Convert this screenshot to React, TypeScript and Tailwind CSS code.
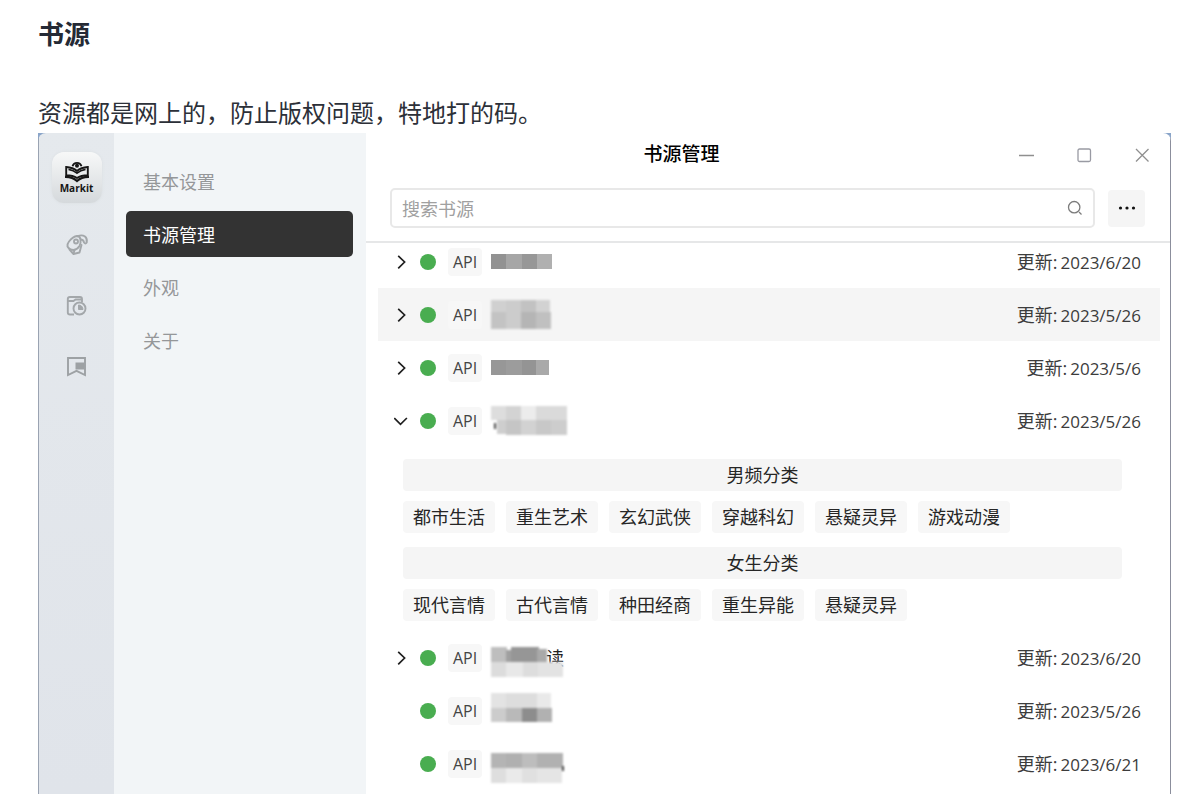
import { useState } from 'react';

type Block = [x: number, y: number, w: number, h: number, fill: string];

interface Source {
  id: number;
  date: string;
  expandable: boolean;
  highlighted?: boolean;
  width: number;
  blocks: Block[];
  sharp?: boolean;
  tail?: string;
  groups?: { title: string; tags: string[] }[];
}

const sources: Source[] = [
  {
    id: 1,
    date: '2023/6/20',
    expandable: true,
    width: 61,
    sharp: true,
    blocks: [
      [0, 11, 15, 15, '#929292'],
      [15, 11, 16, 15, '#a6a6a6'],
      [31, 11, 15, 15, '#979797'],
      [46, 11, 15, 15, '#b0b0b0'],
    ],
  },
  {
    id: 2,
    date: '2023/5/26',
    expandable: true,
    highlighted: true,
    width: 60,
    blocks: [
      [0, 4, 16, 14, '#d0d0d0'],
      [15, 4, 16, 14, '#cccccc'],
      [30, 4, 16, 14, '#c2c2c2'],
      [45, 4, 14, 14, '#d2d2d2'],
      [0, 16, 16, 17, '#c3c3c3'],
      [15, 16, 16, 17, '#cccccc'],
      [30, 16, 16, 17, '#b5b5b5'],
      [45, 16, 15, 17, '#c0c0c0'],
    ],
  },
  {
    id: 3,
    date: '2023/5/6',
    expandable: true,
    width: 58,
    sharp: true,
    blocks: [
      [0, 11, 15, 15, '#979797'],
      [15, 11, 16, 15, '#9c9c9c'],
      [31, 11, 14, 15, '#949494'],
      [45, 11, 13, 15, '#a9a9a9'],
    ],
  },
  {
    id: 4,
    date: '2023/5/26',
    expandable: true,
    width: 76,
    blocks: [
      [0, 4, 16, 14, '#dddddd'],
      [15, 4, 16, 14, '#d3d3d3'],
      [30, 4, 16, 14, '#ececec'],
      [45, 4, 31, 14, '#dadada'],
      [6, 18, 10, 14, '#cecece'],
      [3, 21, 2, 6, '#4a4a4a'],
      [15, 18, 16, 15, '#c5c5c5'],
      [30, 18, 16, 15, '#d2d2d2'],
      [45, 18, 16, 15, '#c8c8c8'],
      [60, 18, 16, 15, '#cdcdcd'],
    ],
    groups: [
      {
        title: '男频分类',
        tags: ['都市生活', '重生艺术', '玄幻武侠', '穿越科幻', '悬疑灵异', '游戏动漫'],
      },
      {
        title: '女生分类',
        tags: ['现代言情', '古代言情', '种田经商', '重生异能', '悬疑灵异'],
      },
    ],
  },
  {
    id: 5,
    date: '2023/6/20',
    expandable: true,
    width: 73,
    tail: '读',
    blocks: [
      [0, 8, 16, 15, '#bebebe'],
      [15, 11, 16, 12, '#a0a0a0'],
      [20, 8, 28, 15, '#969696'],
      [46, 10, 10, 13, '#a9a9a9'],
      [0, 23, 16, 15, '#dcdcdc'],
      [15, 23, 17, 15, '#e8e8e8'],
      [32, 23, 16, 15, '#dddddd'],
      [47, 23, 25, 15, '#e3e3e3'],
    ],
  },
  {
    id: 6,
    date: '2023/5/26',
    expandable: false,
    width: 61,
    blocks: [
      [0, 1, 16, 15, '#e3e3e3'],
      [15, 1, 31, 15, '#dddddd'],
      [46, 1, 14, 15, '#e9e9e9'],
      [0, 16, 16, 14, '#cccccc'],
      [15, 16, 16, 14, '#b9b9b9'],
      [31, 16, 15, 14, '#8d8d8d'],
      [46, 16, 15, 14, '#b1b1b1'],
    ],
  },
  {
    id: 7,
    date: '2023/6/21',
    expandable: false,
    width: 73,
    blocks: [
      [0, 8, 16, 15, '#b4b4b4'],
      [15, 8, 16, 15, '#b0b0b0'],
      [31, 8, 16, 15, '#bdbdbd'],
      [46, 8, 26, 15, '#b1b1b1'],
      [71, 21, 2, 5, '#4a4a4a'],
      [0, 23, 16, 15, '#dedede'],
      [15, 23, 16, 15, '#eaeaea'],
      [31, 23, 16, 15, '#e0e0e0'],
      [46, 23, 25, 15, '#e5e5e5'],
    ],
  },
];

const menuItems = ['基本设置', '书源管理', '外观', '关于'];

function Mosaic({ source }: { source: Source }) {
  return (
    <span className="relative flex">
      {source.tail && (
        <span className="absolute left-[55px] top-[7px] text-[18px] leading-6 text-[#222222]">{source.tail}</span>
      )}
      <svg
        className={source.sharp ? 'relative overflow-visible' : 'relative overflow-visible blur-[1px]'}
        width={source.width}
        height="37"
        shapeRendering="crispEdges"
        aria-hidden="true"
      >
        {source.blocks.map(([x, y, w, h, fill], i) => (
          <rect key={i} x={x} y={y} width={w} height={h} fill={fill} />
        ))}
      </svg>
    </span>
  );
}

function Chevron({ open }: { open: boolean }) {
  return (
    <svg width="16" height="16" viewBox="0 0 16 16" fill="none" stroke="#1f1f1f" strokeWidth="1.7" aria-hidden="true">
      <path d={open ? 'M0.3 5L6.500 11.300L12.900 5' : 'M4.200 1.800L10.600 8L4.200 14.300'} />
    </svg>
  );
}

function Rail() {
  return (
    <nav
      aria-label="主导航"
      className="flex w-[76px] shrink-0 flex-col items-center gap-6 border-l border-[#9aa3b2] bg-linear-to-b from-[#e5e9ed] to-[#e0e4ea] pt-[19px]"
    >
      <div className="flex h-[51px] w-[50px] flex-col items-center rounded-xl bg-linear-to-b from-[#f7f8f8] to-[#d5d9dc] pt-[9px] shadow-[0_0_3px_#d9dde0]">
        <svg width="28" height="22" viewBox="0 0 28 22" fill="none" aria-hidden="true">
          <path d="M9.500 5.200A4.700 4.700 0 0 1 18.500 5.200" stroke="#161616" strokeWidth="1.800" />
          <circle cx="14" cy="4.800" r="2" fill="#161616" />
          <path d="M3.200 6Q10 6.500 14 10Q18 6.500 24.800 6V14.200Q18 14.200 14 17Q10 14.200 3.200 14.200Z" stroke="#161616" strokeWidth="1.900" />
          <path d="M5.500 8.400Q10.500 9.200 14 12.200Q17.500 9.200 22.500 8.400" stroke="#161616" strokeWidth="1.600" />
          <path d="M2 15.800Q9.500 15.600 14 20Q18.500 15.600 26 15.800" stroke="#161616" strokeWidth="2.200" />
        </svg>
        <span className="font-['Open_Sans',sans-serif] text-[10px] font-bold leading-[10px] text-[#161616]">Markit</span>
      </div>
      <div className="flex flex-col gap-[37px] pt-[6px]">
        <button type="button" aria-label="发现" className="flex">
          <svg width="24" height="24" viewBox="0 0 24 24" fill="none" stroke="#a3a7aa" strokeWidth="1.9" strokeLinejoin="round" strokeLinecap="round">
            <path d="M4 8.500Q8 3.500 12 3Q15 3 15.500 6.500Q16 10 14.500 13Q12.500 16.500 8.500 17Q4.500 17 2.500 13.500Q2 11 4 8.500Z" />
            <circle cx="11" cy="8.500" r="2" />
            <path d="M12.500 3.200Q17 1.500 20 3.500Q22.500 5.500 21.700 9.500Q20.500 11.500 19 9.500Q18.800 7 16 6.500M4.500 16.500L8.500 21L14.500 19.500L16.500 12M8.500 20.500L9.500 17" />
          </svg>
        </button>
        <button type="button" aria-label="历史" className="flex">
          <svg width="24" height="24" viewBox="0 0 24 24" fill="none" stroke="#a3a7aa" strokeWidth="1.900" strokeLinejoin="round">
            <path d="M9 20.500H5Q2.800 20.500 2.800 18.500V5Q2.800 3 5 3H15Q17 3 17 5V8M3 7H8.500L10.500 5.500H16.500" />
            <circle cx="14.500" cy="14.500" r="6" />
            <path d="M13.500 11L13.500 15.500H18A4.500 4.500 0 0 0 13.500 11Z" fill="#a3a7aa" strokeWidth="1" />
          </svg>
        </button>
        <button type="button" aria-label="书签" className="flex">
          <svg width="24" height="24" viewBox="0 0 24 24" fill="none" stroke="#9da1a4" strokeWidth="1.900">
            <path d="M3 3H20V20L11.500 15.800L3 20Z" />
            <path d="M10.500 7.500H19.500V14.500H10.500Z" fill="#9da1a4" stroke="none" />
          </svg>
        </button>
      </div>
    </nav>
  );
}

function SettingsMenu() {
  const [selected, setSelected] = useState('书源管理');
  return (
    <nav aria-label="设置" className="flex w-[252px] shrink-0 flex-col gap-[7px] bg-[#f2f5f7] pl-3 pr-[13px] pt-[25px]">
      {menuItems.map((item) => (
        <button
          key={item}
          type="button"
          onClick={() => setSelected(item)}
          className={
            item === selected
              ? 'h-[46px] rounded-[5px] bg-[#333333] px-[17px] pt-[2px] text-left text-[18px] text-white'
              : 'h-[46px] rounded-[5px] px-[17px] pt-[2px] text-left text-[18px] text-[#959799]'
          }
        >
          {item}
        </button>
      ))}
    </nav>
  );
}

function SourceRow({ source }: { source: Source }) {
  const [open, setOpen] = useState(Boolean(source.groups));
  return (
    <li>
      <div className={source.highlighted ? 'flex h-[53px] items-center bg-[#f5f5f5] pl-4 pr-[19px]' : 'flex h-[53px] items-center pl-4 pr-[19px]'}>
        {source.expandable ? (
          <button type="button" aria-label="展开" aria-expanded={open} onClick={() => setOpen(!open)} className="flex w-4">
            <Chevron open={open} />
          </button>
        ) : (
          <span className="w-4" />
        )}
        <span className="ml-[10px] size-4 rounded-full bg-[#49ad50]" />
        <span className="ml-3 flex h-7 w-[34px] items-center justify-center rounded-sm bg-[#f7f7f7] text-[16px] text-[#444444]">
          API
        </span>
        <span className="ml-[9px]">
          <Mosaic source={source} />
        </span>
        <span className="ml-auto flex items-baseline gap-[3px] pt-[2px] text-[#3c3c3c]">
          <span className="text-[18px]">更新:</span>
          <time className="text-[17px]">{source.date}</time>
        </span>
      </div>
      {open && source.groups && (
        <div className="flex flex-col gap-[14px] pb-[10px] pl-[25px] pr-[38px] pt-3">
          {source.groups.map((group) => (
            <section key={group.title} className="flex flex-col gap-[10px] text-[18px] leading-8 text-[#262626]">
              <h3 className="h-8 rounded-sm bg-[#f5f5f5] text-center">{group.title}</h3>
              <div className="flex flex-wrap gap-[11px]">
                {group.tags.map((tag) => (
                  <button key={tag} type="button" className="h-8 rounded-sm bg-[#f7f7f7] px-[10px]">
                    {tag}
                  </button>
                ))}
              </div>
            </section>
          ))}
        </div>
      )}
    </li>
  );
}

function SourceManager() {
  return (
    <main className="min-w-0 flex-1 border-r border-[#8b8e9c] bg-white">
      <header className="border-b-2 border-[#e6e7e8] pb-[13px]">
        <div className="flex h-[55px] items-center pb-[12px] pr-[18px]">
          <h2 className="flex-1 pr-[19px] text-center text-[19px] font-medium text-black">书源管理</h2>
          <div className="flex gap-[38px]">
            <button type="button" aria-label="最小化" className="flex">
              <svg width="20" height="20" fill="none" stroke="#8f8f8f" strokeWidth="1.300">
                <path d="M3 10.500H18" />
              </svg>
            </button>
            <button type="button" aria-label="最大化" className="flex">
              <svg width="20" height="20" fill="none" stroke="#999aa3" strokeWidth="1.300">
                <rect x="4" y="4" width="12.500" height="12.500" rx="1.500" />
              </svg>
            </button>
            <button type="button" aria-label="关闭" className="flex">
              <svg width="20" height="20" fill="none" stroke="#8f8f8f" strokeWidth="1.300">
                <path d="M4 4L16.500 16.500M16.500 4L4 16.500" />
              </svg>
            </button>
          </div>
        </div>
        <div className="flex items-center gap-[13px] pl-6 pr-[25px]">
          <label className="flex h-10 flex-1 items-center rounded-[5px] border-2 border-[#e8e8e8] pl-[10px] pr-[9px]">
            <input
              type="text"
              aria-label="搜索书源"
              placeholder="搜索书源"
              className="min-w-0 flex-1 bg-transparent pt-[2px] text-[18px] text-[#333333] outline-none placeholder:text-[#a0a0a0]"
            />
            <svg width="18" height="18" viewBox="0 0 18 18" fill="none" stroke="#7c7c7c" strokeWidth="1.300" aria-hidden="true">
              <circle cx="8.200" cy="8.200" r="5.700" />
              <path d="M13 13L15.500 15.500" />
            </svg>
          </label>
          <button type="button" aria-label="更多" className="flex size-[37px] items-center justify-center rounded-sm bg-[#f5f5f5]">
            <svg width="18" height="4" fill="#111111">
              <circle cx="2.500" cy="2" r="1.600" />
              <circle cx="9" cy="2" r="1.600" />
              <circle cx="15.500" cy="2" r="1.600" />
            </svg>
          </button>
        </div>
      </header>
      <ul className="-mt-2 pl-3 pr-[10px]">
        {sources.map((source) => (
          <SourceRow key={source.id} source={source} />
        ))}
      </ul>
    </main>
  );
}

export default function App() {
  return (
    <div className="flex min-h-screen flex-col bg-white pl-[38px] pr-[14px] pt-4 font-['Open_Sans','Noto_Sans_CJK_SC',sans-serif]">
      <h1 className="text-[26px] font-bold leading-9 text-[#252a35]">书源</h1>
      <p className="mt-10 text-[24px] leading-[41px] text-[#2c3038]">资源都是网上的，防止版权问题，特地打的码。</p>
      <div className="flex flex-1 bg-[#8aa5c9]">
        <div className="flex min-w-0 flex-1 overflow-hidden rounded-t-lg">
          <Rail />
          <SettingsMenu />
          <SourceManager />
        </div>
      </div>
    </div>
  );
}
